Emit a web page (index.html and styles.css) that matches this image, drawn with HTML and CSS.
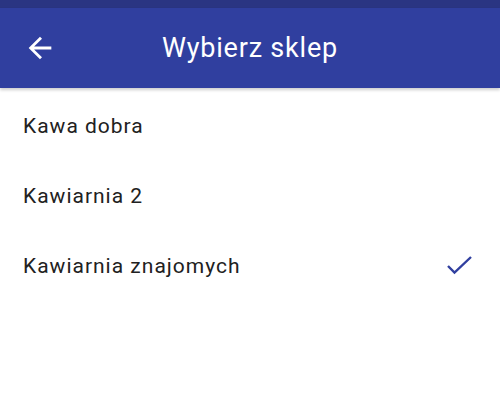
FILE: index.html
```html
<!DOCTYPE html>
<html lang="pl">
<head>
  <meta charset="UTF-8">
  <title>Wybierz sklep</title>
  <link rel="stylesheet" href="styles.css">
</head>
<body>

<div class="status"></div>
<div class="toolbar">
  <div class="back">
    <svg width="34" height="34" viewBox="0 0 24 24"><path fill="#fff" d="M20 11H7.83l5.59-5.59L12 4l-8 8 8 8 1.41-1.41L7.83 13H20v-2z"/></svg>
  </div>
  <h1>Wybierz sklep</h1>
  <div></div>
</div>

<ul class="list">
  <li>Kawa dobra</li>
  <li>Kawiarnia 2</li>
  <li class="selected">Kawiarnia znajomych
    <svg class="check" width="30" height="24" viewBox="0 0 30 24"><polyline points="2,10 8.5,16.5 25,1" fill="none" stroke="#303f9f" stroke-width="2.4"/></svg>
  </li>
</ul>

</body>
</html>
```

FILE: styles.css
```css
* {
  box-sizing: border-box;
}
body {
  margin: 0;
  font-family: Roboto, 'Noto Sans', sans-serif;
  background: #fff;
  color: #212121;
}
.status {
  height: 8px;
  background: #2a3582;
}
.toolbar {
  height: 80px;
  background: #303f9f;
  display: grid;
  grid-template-columns: 1fr auto 1fr;
  align-items: center;
  box-shadow: 0 2px 3px rgba(0, 0, 0, 0.2);
  position: relative;
}
.back {
  padding-left: 23px;
  display: flex;
  align-items: center;
}
h1 {
  margin: 0;
  color: #fff;
  font-size: 27px;
  font-weight: 400;
  letter-spacing: 0.8px;
}
.list {
  list-style: none;
  margin: 0;
  padding: 3px 0 0;
}
.list li {
  height: 70px;
  display: flex;
  align-items: center;
  justify-content: space-between;
  padding: 0 24px 0 23px;
  font-size: 21px;
  letter-spacing: 1px;
}
.check {
  display: block;
  margin-top: 4px;
}
```
